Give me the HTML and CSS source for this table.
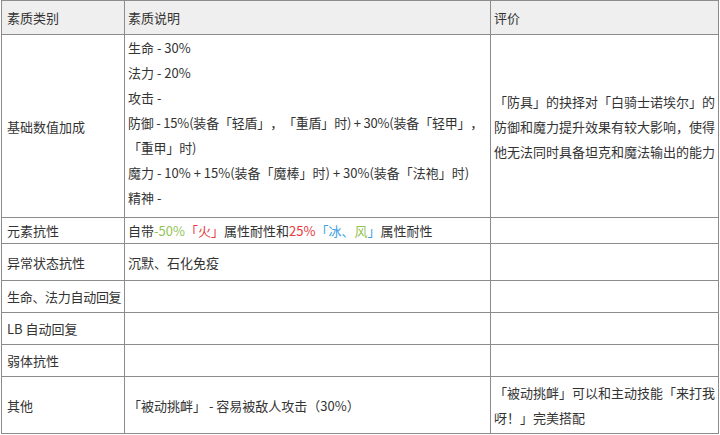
FILE: index.html
```html
<!DOCTYPE html>
<html lang="zh-CN">
<head>
<meta charset="utf-8">
<link rel="stylesheet" href="styles.css">
</head>
<body>
<table class="grid">
  <colgroup>
    <col class="c1">
    <col class="c2">
    <col class="c3">
  </colgroup>
  <thead>
    <tr class="head">
      <th>素质类别</th>
      <th>素质说明</th>
      <th>评价</th>
    </tr>
  </thead>
  <tbody>
    <tr class="r-base">
      <td>基础数值加成</td>
      <td class="lines">
        <div>生命 - 30%</div>
        <div>法力 - 20%</div>
        <div>攻击 -</div>
        <div class="tight"><span class="keep">防御 - 15%(装备「轻盾」，「重盾」时) + 30%(装备「轻甲」，</span>「重甲」时)</div>
        <div>魔力 - 10% + 15%(装备「魔棒」时) + 30%(装备「法袍」时)</div>
        <div>精神 -</div>
      </td>
      <td class="note">「防具」的抉择对「白骑士诺埃尔」的防御和魔力提升效果有较大影响，使得他无法同时具备坦克和魔法输出的能力</td>
    </tr>
    <tr class="r-elem">
      <td>元素抗性</td>
      <td>自带<span class="g">-50%</span><span class="r">「火」</span>属性耐性和<span class="r">25%</span><span class="b">「冰</span><span class="b">、</span><span class="g">风</span><span class="b">」</span>属性耐性</td>
      <td></td>
    </tr>
    <tr class="r-abn">
      <td>异常状态抗性</td>
      <td>沉默、石化免疫</td>
      <td></td>
    </tr>
    <tr class="r-std">
      <td class="nowrap">生命、法力自动回复</td>
      <td></td>
      <td></td>
    </tr>
    <tr class="r-std">
      <td>LB 自动回复</td>
      <td></td>
      <td></td>
    </tr>
    <tr class="r-std">
      <td>弱体抗性</td>
      <td></td>
      <td></td>
    </tr>
    <tr class="r-other">
      <td>其他</td>
      <td>「被动挑衅」 - 容易被敌人攻击（30%）</td>
      <td class="note2">「被动挑衅」可以和主动技能「来打我呀！」完美搭配</td>
    </tr>
  </tbody>
</table>
</body>
</html>
```

FILE: styles.css
```css
html, body {
  margin: 0;
  padding: 0;
  background: #ffffff;
}

body {
  font-family: "Noto Sans CJK SC", "Noto Sans", "Liberation Sans", sans-serif;
  font-size: 13px;
  color: #333333;
  text-spacing-trim: space-all;
}

.grid {
  border-collapse: collapse;
  table-layout: fixed;
  width: 717px;
  margin: 0 0 0 1px;
}

.c1 { width: 123px; }
.c2 { width: 366px; }
.c3 { width: 228px; }

.grid th,
.grid td {
  border: 1px solid #8c8c8c;
  padding: 0 3px;
  text-align: left;
  vertical-align: middle;
  font-weight: normal;
  line-height: 25px;
}

.grid th:first-child,
.grid td:first-child {
  padding-left: 5px;
  padding-right: 0;
}

.nowrap {
  white-space: nowrap;
  letter-spacing: -0.3px;
}

.keep {
  white-space: nowrap;
}

.tight {
  letter-spacing: -0.2px;
}

.head th {
  background: #efefef;
  height: 33px;
}

.r-base td {
  height: 182px;
}

.r-base td.lines {
  vertical-align: top;
  padding-top: 0;
}

.note {
  line-height: 24px;
  text-align: center;
}

.r-elem td { height: 25px; }
.r-abn td { height: 36px; }
.r-std td { height: 31px; }
.r-other td { height: 56px; }

.note2 {
  line-height: 29px;
}

.g { color: #93c455; }
.r { color: #e8383d; }
.b { color: #3d9ddf; }
```
